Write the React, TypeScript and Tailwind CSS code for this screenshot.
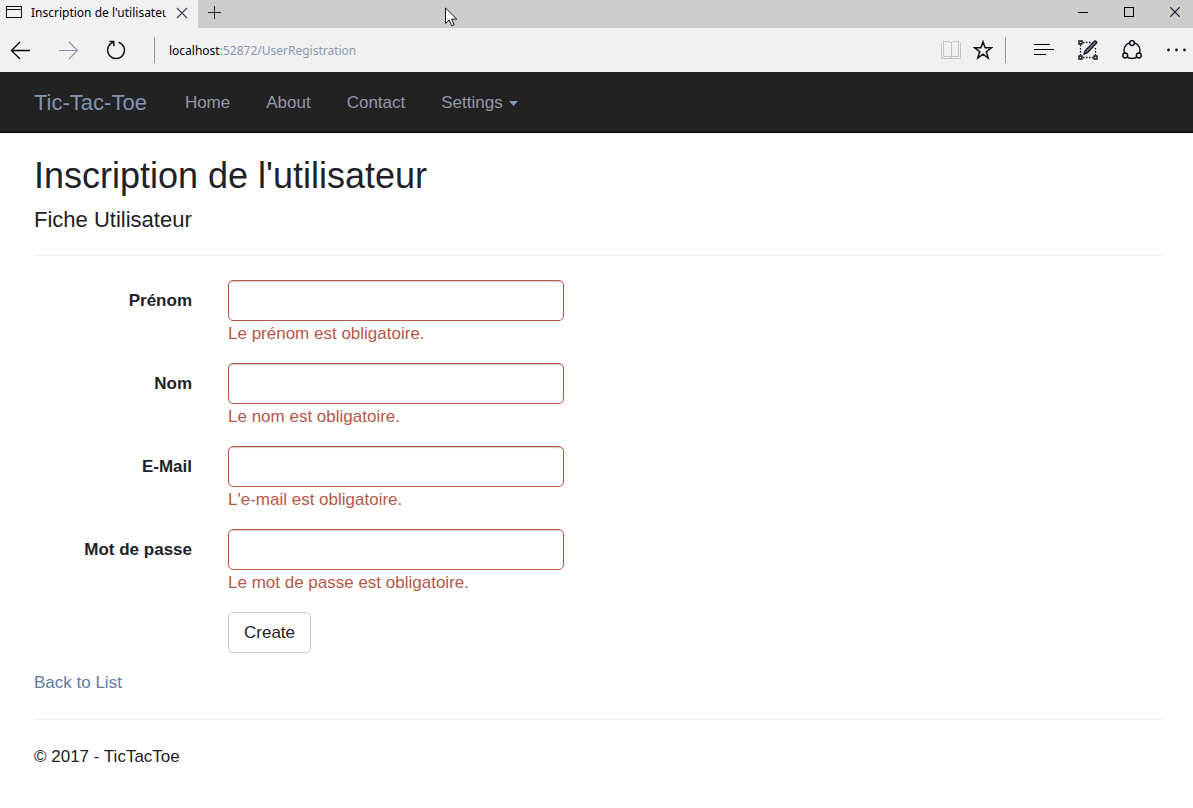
import type { ReactNode } from 'react';

type IconButtonProps = { label: string; className: string; children: ReactNode };

function IconButton({ label, className, children }: IconButtonProps) {
  return (
    <button type="button" aria-label={label} className={`flex shrink-0 items-center justify-center ${className}`}>
      {children}
    </button>
  );
}

function TabBar() {
  return (
    <div className="flex h-7 bg-[#cdccca] font-['Noto_Sans',sans-serif] text-xs text-black">
      <div className="flex w-[198px] shrink-0 items-center bg-[#f1f1f1] pb-[3px] pl-1.5">
        <svg width="16" height="14" viewBox="0 0 16 14" fill="none" stroke="#111" shapeRendering="crispEdges">
          <path d="M.5.5h15v11H.5zM.5 3.500h15" />
        </svg>
        <span className="ml-[9px] w-[135px] shrink-0 overflow-hidden whitespace-nowrap">Inscription de l'utilisateur</span>
        <IconButton label="Close tab" className="ml-2 size-4">
          <svg width="12" height="12" viewBox="0 0 12 12" fill="none" stroke="#3a4156" strokeWidth="1.1">
            <path d="M1 1l10 10M11 1L1 11" />
          </svg>
        </IconButton>
      </div>
      <IconButton label="New tab" className="w-8 pb-1">
        <svg width="14" height="14" viewBox="0 0 14 14" fill="none" stroke="#222" shapeRendering="crispEdges">
          <path d="M.5 7.5h13M7.5 1v13" />
        </svg>
      </IconButton>
      <div className="ml-auto flex gap-2.5">
        <IconButton label="Minimize" className="w-9 pb-1">
          <svg width="10" height="10" viewBox="0 0 10 10" stroke="#000" shapeRendering="crispEdges">
            <path d="M0 5.5h10" />
          </svg>
        </IconButton>
        <IconButton label="Maximize" className="w-9 pb-1">
          <svg width="10" height="10" viewBox="0 0 10 10" fill="none" stroke="#000" shapeRendering="crispEdges">
            <path d="M.5.5h9v9h-9z" />
          </svg>
        </IconButton>
        <IconButton label="Close" className="w-9 pb-1">
          <svg width="10" height="10" viewBox="0 0 10 10" fill="none" stroke="#111827" strokeWidth="1.2">
            <path d="M.3.3l9.400 9.400M9.700.3L.3 9.700" />
          </svg>
        </IconButton>
      </div>
    </div>
  );
}

function AddressBar() {
  return (
    <div className="flex h-11 items-center bg-[#f1f1f1] font-['Noto_Sans',sans-serif] text-xs">
      <IconButton label="Back" className="ml-2.5 size-5">
        <svg width="20" height="20" viewBox="0 0 20 20" fill="none" stroke="#000" strokeWidth="1.3">
          <path d="M20 10.5H1.5M10 2l-8.5 8.5L10 19" />
        </svg>
      </IconButton>
      <IconButton label="Forward" className="ml-7 size-5">
        <svg width="20" height="20" viewBox="0 0 20 20" fill="none" stroke="#8795b3" strokeWidth="1.1">
          <path d="M1 10.5h18.5M11 2l8.5 8.5L11 19" />
        </svg>
      </IconButton>
      <IconButton label="Refresh" className="ml-7 size-5">
        <svg width="20" height="20" viewBox="0 0 20 20" fill="none" stroke="#0f1320" strokeWidth="1.5">
          <path d="M7.2 2.3A8.4 8.4 0 1 0 12.6 2.2" />
          <path d="M3.4 1.6h4.4v4.6" />
        </svg>
      </IconButton>
      <div className="ml-7 h-[26px] w-px shrink-0 bg-[#8795b3]" />
      <div role="textbox" aria-label="Address" className="ml-3.5 flex-1 whitespace-nowrap pt-0.5 text-[#8a98b4]">
        <span className="text-black">localhost</span>:52872/UserRegistration
      </div>
      <IconButton label="Reading view" className="size-5">
        <svg width="20" height="20" viewBox="0 0 20 20" fill="none" stroke="#c3c3c3" shapeRendering="crispEdges">
          <path d="M2.5 1.5h6l1.500 1 1.500-1h6v15h-6.500l-1 1-1-1h-6.500z" />
          <path d="M10 2v15M.5 3v15.500h19V3" />
          <path d="M1.500 18h17" strokeDasharray="1 1" />
        </svg>
      </IconButton>
      <IconButton label="Add to favorites" className="ml-3 size-5">
        <svg width="20" height="20" viewBox="0 0 20 20" fill="none" stroke="#10131c" strokeWidth="1.5">
          <path d="M10 1.800l2.100 6h6.300l-5.100 3.900 1.900 6.300-5.200-3.800-5.200 3.800 1.900-6.300-5.100-3.900h6.300z" />
        </svg>
      </IconButton>
      <div className="ml-3 h-[26px] w-px shrink-0 bg-[#8795b3]" />
      <IconButton label="Hub" className="ml-7 size-5">
        <svg width="20" height="20" viewBox="0 0 20 20" fill="none" stroke="#000" shapeRendering="crispEdges">
          <path d="M0 4.500h16M0 9.500h20M0 14.500h12" />
        </svg>
      </IconButton>
      <IconButton label="Make a web note" className="ml-6 size-5">
        <svg width="20" height="20" viewBox="0 0 20 20" fill="none" stroke="#0f1526">
          <path d="M5 2.500h9M2.500 5v10M5 17.500h10M17.500 8v7" strokeWidth="1.300" strokeDasharray="1.500 1.500" />
          <path d="M1 1h3v3H1zM1 16h3v3H1zM16 16h3v3h-3z" strokeWidth="1.400" />
          <path d="M6 14.200l1.200-3.700L16.600 1.100q1.400-.5 2.300 1.500L9.500 12.700z" fill="#69707b" strokeWidth="1.300" />
        </svg>
      </IconButton>
      <IconButton label="Share" className="ml-6 size-5">
        <svg width="20" height="20" viewBox="0 0 20 20" fill="none" stroke="#0f1320" strokeWidth="1.500">
          <circle cx="10" cy="10.500" r="8" />
          <g fill="#f1f1f1">
            <circle cx="10" cy="3" r="2.400" />
            <circle cx="3.200" cy="15.500" r="2.400" />
            <circle cx="16.800" cy="15.500" r="2.400" />
          </g>
        </svg>
      </IconButton>
      <IconButton label="More" className="ml-6 mr-[7px] size-5">
        <svg width="20" height="20" viewBox="0 0 20 20" fill="#0f1526">
          <circle cx="2.500" cy="10" r="1.400" />
          <circle cx="10.500" cy="10" r="1.400" />
          <circle cx="18.500" cy="10" r="1.400" />
        </svg>
      </IconButton>
    </div>
  );
}

function SiteNav() {
  return (
    <nav className="flex h-[61px] items-center gap-[38px] border-b border-black bg-[#222] pl-[34px] pt-0.5 text-[17px] text-[#9298aa]">
      <a href="#" className="text-[22px] text-[#8294b4]">Tic-Tac-Toe</a>
      <div className="flex items-center gap-9">
        <a href="#">Home</a>
        <a href="#">About</a>
        <a href="#">Contact</a>
        <button type="button" className="flex items-center gap-1.5">
          Settings
          <svg width="9" height="5" viewBox="0 0 9 5" fill="#8a98b8">
            <path d="M0 0h9L4.500 5z" />
          </svg>
        </button>
      </div>
    </nav>
  );
}

const fields = [
  { id: 'firstName', label: 'Prénom', type: 'text', error: 'Le prénom est obligatoire.' },
  { id: 'lastName', label: 'Nom', type: 'text', error: 'Le nom est obligatoire.' },
  { id: 'email', label: 'E-Mail', type: 'email', error: "L'e-mail est obligatoire." },
  { id: 'password', label: 'Mot de passe', type: 'password', error: 'Le mot de passe est obligatoire.' },
];

function RegistrationForm() {
  return (
    <form noValidate className="mt-6 flex flex-col gap-[17px]">
      {fields.map((field) => (
        <div key={field.id} className="flex gap-9">
          <label htmlFor={field.id} className="w-[158px] shrink-0 pt-[9px] text-right font-bold">
            {field.label}
          </label>
          <div className="w-[336px]">
            <input
              id={field.id}
              type={field.type}
              aria-invalid="true"
              aria-describedby={`${field.id}-error`}
              className="block h-[41px] w-full rounded-[5px] border border-[#b5584a] bg-white px-3.5 shadow-[inset_0_1px_1px_rgba(0,0,0,0.2)] outline-none"
            />
            <p id={`${field.id}-error`} className="mt-px text-[#b5584a]">{field.error}</p>
          </div>
        </div>
      ))}
      <div className="pl-[194px]">
        <button type="button" className="h-[41px] rounded-[5px] border border-[#c8c8c8] bg-white px-[15px]">
          Create
        </button>
      </div>
    </form>
  );
}

function MousePointer() {
  return (
    <svg className="pointer-events-none absolute left-[445px] top-[7px]" width="13" height="20" viewBox="0 0 13 20" fill="#fff" stroke="#111827">
      <path d="M.5 1v15.500l3.700-3.500 2.500 5.800 2.500-1.100-2.500-5.600h5z" />
    </svg>
  );
}

export default function App() {
  return (
    <div className="relative min-h-screen bg-white font-['Liberation_Sans',Arial,sans-serif] text-[17px] leading-6 text-[#212228]">
      <TabBar />
      <AddressBar />
      <SiteNav />
      <main className="px-[34px] pt-[23px]">
        <h2 className="text-[36px] leading-10">Inscription de l'utilisateur</h2>
        <h4 className="mt-3 text-[22px] leading-6">Fiche Utilisateur</h4>
        <hr className="mt-[23px] -mr-[3px] border-[#eee]" />
        <RegistrationForm />
        <div className="mt-[18px]">
          <a href="#" className="text-[#647a9f]">Back to List</a>
        </div>
        <hr className="mt-6 -mr-[3px] border-[#eee]" />
        <footer className="mt-[25px]">© 2017 - TicTacToe</footer>
      </main>
      <MousePointer />
    </div>
  );
}
